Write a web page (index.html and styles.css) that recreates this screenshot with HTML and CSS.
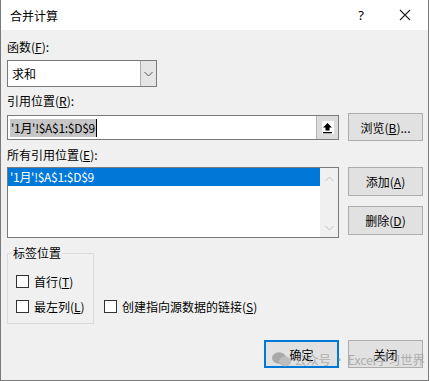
FILE: index.html
```html
<!DOCTYPE html>
<html>
<head>
  <meta charset="utf-8">
  <link rel="stylesheet" href="styles.css">
</head>
<body>
  <div class="window">
    <div class="titlebar">
      <div class="title">合并计算</div>
      <div class="title-help">?</div>
      <div class="title-close">
        <svg width="12" height="12" viewBox="0 0 12 12"><path d="M1 1L11 11M11 1L1 11" stroke="#222" stroke-width="1.1" fill="none"/></svg>
      </div>
    </div>

    <div class="content">
      <div class="label first">函数(<u>F</u>):</div>
      <div class="combo">
        <div class="combo-value">求和</div>
        <div class="combo-btn">
          <svg width="9" height="6" viewBox="0 0 9 6"><path d="M0.5 1L4.5 5L8.5 1" stroke="#555" stroke-width="1" fill="none"/></svg>
        </div>
      </div>

      <div class="label">引用位置(<u>R</u>):</div>
      <div class="row ref-row">
        <div class="ref-input">
          <span class="sel">'1月'!$A$1:$D$9</span><span class="caret"></span>
          <div class="collapse-btn">
            <div class="collapse-icon">
              <svg width="11" height="12" viewBox="0 0 11 12"><path d="M5.5 1L1 5.5H3.5V8.5H7.5V5.5H10Z" fill="#000"/><rect x="1" y="10" width="9" height="1.3" fill="#000"/></svg>
            </div>
          </div>
        </div>
        <button class="btn">浏览(<u>B</u>)...</button>
      </div>

      <div class="label">所有引用位置(<u>E</u>):</div>
      <div class="row list-row">
        <div class="list">
          <div class="list-items">
            <div class="list-item selected">'1月'!$A$1:$D$9</div>
          </div>
          <div class="scrollbar">
            <svg width="9" height="6" viewBox="0 0 9 6"><path d="M0.5 5L4.5 1L8.5 5" stroke="#c2c2c2" stroke-width="1" fill="none"/></svg>
            <svg width="9" height="6" viewBox="0 0 9 6"><path d="M0.5 1L4.5 5L8.5 1" stroke="#c2c2c2" stroke-width="1" fill="none"/></svg>
          </div>
        </div>
        <div class="side-btns">
          <button class="btn tall">添加(<u>A</u>)</button>
          <button class="btn tall">删除(<u>D</u>)</button>
        </div>
      </div>

      <div class="row lower-row">
        <fieldset class="group">
          <legend>标签位置</legend>
          <label class="check"><span class="box"></span>首行(<u>T</u>)</label>
          <label class="check"><span class="box"></span>最左列(<u>L</u>)</label>
        </fieldset>
        <label class="check link-check"><span class="box"></span>创建指向源数据的链接(<u>S</u>)</label>
      </div>

      <div class="row footer">
        <button class="btn default">确定</button>
        <button class="btn">关闭</button>
      </div>
    </div>

    <!-- watermark from the screenshot -->
    <div class="watermark">
      <svg width="19" height="15" viewBox="0 0 19 15"><ellipse cx="7" cy="6" rx="7" ry="5.8" fill="#9a9a9a"/><ellipse cx="13" cy="9.5" rx="6" ry="5" fill="#b5b5b5"/></svg>
      <span>公众号 · Excel学习世界</span>
    </div>
  </div>
</body>
</html>
```

FILE: styles.css
```css
body {
  margin: 0;
  background: #ffffff;
  font-family: "Noto Sans CJK SC", "Noto Sans", sans-serif;
  font-size: 12px;
  color: #000;
}

.window {
  position: relative;
  box-sizing: border-box;
  width: 429px;
  height: 381px;
  border-left: 1px solid #7a7a7a;
  border-right: 1px solid #7a7a7a;
  border-bottom: 1px solid #7a7a7a;
  background: #f0f0f0;
}

.titlebar {
  display: flex;
  align-items: center;
  height: 30px;
  background: #ffffff;
}

.title {
  flex: 1;
  padding-left: 9px;
  font-size: 12px;
}

.title-help {
  width: 14px;
  margin-right: 31px;
  font-family: "Noto Sans", sans-serif;
  font-size: 13px;
  text-align: center;
}

.title-close {
  display: flex;
  width: 12px;
  margin-right: 17px;
}

.content {
  padding: 9px 5px 0 6px;
}

.label {
  height: 16px;
  line-height: 16px;
  margin-top: 6px;
}

.label.first {
  margin-top: 0;
}

.combo {
  display: flex;
  width: 150px;
  height: 27px;
  margin-top: 5px;
  box-sizing: border-box;
  border: 1px solid #7a7a7a;
  background: #fff;
}

.combo-value {
  flex: 1;
  padding-left: 4px;
  line-height: 25px;
}

.combo-btn {
  display: flex;
  align-items: center;
  justify-content: center;
  width: 15px;
  background: #e5e5e5;
  border-left: 1px solid #adadad;
}

.row {
  display: flex;
}

.ref-row {
  margin-top: 4px;
  gap: 9px;
}

.ref-input {
  display: flex;
  align-items: center;
  width: 332px;
  height: 25px;
  margin-top: 2px;
  box-sizing: border-box;
  border: 1px solid #7a7a7a;
  background: #fff;
  padding-left: 2px;
}

.sel {
  background: #c6c6c6;
  line-height: 18px;
  padding: 0 1px;
  font-size: 12px;
  letter-spacing: -0.3px;
}

.caret {
  width: 1px;
  height: 18px;
  background: #000;
}

.collapse-btn {
  display: flex;
  align-items: center;
  justify-content: center;
  margin-left: auto;
  width: 21px;
  height: 23px;
  background: #dcdcdc;
  border-left: 1px solid #b5b5b5;
}

.collapse-icon {
  display: flex;
  align-items: center;
  justify-content: center;
  width: 12px;
  height: 13px;
  background: #fff;
}

.btn {
  box-sizing: border-box;
  width: 75px;
  height: 28px;
  padding: 0;
  border: 1px solid #adadad;
  background: #e1e1e1;
  font-family: inherit;
  font-size: 12px;
  color: #000;
}

.btn.tall {
  height: 29px;
}

.btn.default {
  border: 2px solid #0078d7;
}

.list-row {
  margin-top: 4px;
  gap: 9px;
}

.list {
  display: flex;
  width: 332px;
  height: 71px;
  box-sizing: border-box;
  border: 1px solid #7a7a7a;
  background: #fff;
}

.list-items {
  flex: 1;
}

.list-item {
  height: 18px;
  line-height: 18px;
  padding-left: 2px;
  font-size: 12px;
  letter-spacing: -0.3px;
}

.list-item.selected {
  background: #0078d7;
  color: #fff;
}

.scrollbar {
  display: flex;
  flex-direction: column;
  align-items: center;
  justify-content: space-between;
  width: 18px;
  padding: 8px 0 6px;
  box-sizing: border-box;
  background: #f0f0f0;
}

.side-btns {
  display: flex;
  flex-direction: column;
  gap: 10px;
}

.lower-row {
  margin-top: 7px;
  align-items: flex-end;
}

.group {
  width: 87px;
  box-sizing: border-box;
  margin: 0;
  padding: 8px 0 4px 8px;
  border: 1px solid #dcdcdc;
}

.group legend {
  margin-left: -4px;
  padding: 0 1px;
  line-height: 16px;
}

.check {
  display: flex;
  align-items: center;
  height: 25px;
  white-space: nowrap;
}

.box {
  width: 11px;
  height: 11px;
  margin-right: 5px;
  border: 1px solid #333;
  background: #fff;
}

.link-check {
  margin-left: 10px;
  margin-bottom: 5px;
}

.footer {
  justify-content: flex-end;
  gap: 9px;
  margin-top: 16px;
}

.watermark {
  position: absolute;
  left: 271px;
  top: 350px;
  display: flex;
  align-items: center;
  gap: 3px;
  white-space: nowrap;
  color: rgba(150, 150, 150, 0.7);
  font-size: 12.5px;
  letter-spacing: -0.3px;
  pointer-events: none;
}

.watermark svg {
  opacity: 0.8;
}
```
